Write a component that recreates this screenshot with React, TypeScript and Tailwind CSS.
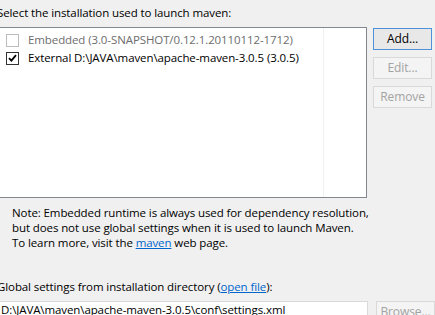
import React from "react";

const font = "font-['Segoe_UI','Open_Sans',sans-serif]";

const Checkbox = ({ checked, disabled }: { checked?: boolean; disabled?: boolean }) => (
  <span
    className={`flex h-[13px] w-[13px] shrink-0 items-center justify-center border bg-white ${
      disabled ? "border-[#bcbcbc]" : "border-[#333333]"
    }`}
  >
    {checked && (
      <svg width="9" height="8" viewBox="0 0 9 8">
        <path d="M1 4.2 L3.4 6.6 L8 1.2" fill="none" stroke="#000" strokeWidth="1.8" />
      </svg>
    )}
  </span>
);

const Button = ({ label, primary, disabled }: { label: string; primary?: boolean; disabled?: boolean }) => (
  <button
    className={`h-[22px] w-[59px] border text-[12px] leading-none tracking-[-0.1px] ${
      primary
        ? "border-[#4d92d8] bg-[#e8e8e8] text-black"
        : disabled
        ? "border-[#d9d9d9] bg-[#f4f4f4] text-[#a3a3a3]"
        : "border-[#adadad] bg-[#e1e1e1] text-black"
    }`}
  >
    {label}
  </button>
);

export default function App() {
  return (
    <div className={`h-[315px] w-[435px] overflow-hidden bg-[#f0f0f0] text-[11.5px] tracking-[-0.1px] text-black ${font}`}>
      <div className="-ml-[3px] w-[438px] pt-[5px]">
        <div className="leading-[15px]">Select the installation used to launch maven:</div>

        <div className="mt-[7px] flex">
          {/* installations table */}
          <div className="flex h-[171px] w-[370px] border border-[#828790] bg-white">
            <div className="w-[326px] border-r border-[#f0f0f0] pt-[3px]">
              <div className="flex h-[18px] items-center pl-[8px]">
                <Checkbox disabled />
                <span className="ml-[9px] text-[#6d6d6d]">Embedded (3.0-SNAPSHOT/0.12.1.20110112-1712)</span>
              </div>
              <div className="flex h-[18px] items-center pl-[8px]">
                <Checkbox checked />
                <span className="ml-[9px]">External D:\JAVA\maven\apache-maven-3.0.5 (3.0.5)</span>
              </div>
            </div>
          </div>

          <div className="ml-[6px] flex flex-col gap-[7px] pt-[1px]">
            <Button label="Add..." primary />
            <Button label="Edit..." disabled />
            <Button label="Remove" disabled />
          </div>
        </div>

        <div className="mt-[7px] pl-[15px] leading-[15px]">
          <p>Note: Embedded runtime is always used for dependency resolution,</p>
          <p>but does not use global settings when it is used to launch Maven.</p>
          <p>
            To learn more, visit the <span className="text-[#0066cc] underline">maven</span> web page.
          </p>
        </div>

        <div className="mt-[29px] leading-[15px]">
          Global settings from installation directory (<span className="text-[#0066cc] underline">open file</span>):
        </div>

        <div className="mt-[7px] flex">
          <div className="h-[23px] w-[372px] border border-[#d9d9d9] bg-white pl-[3px] leading-[15px]">
            D:\JAVA\maven\apache-maven-3.0.5\conf\settings.xml
          </div>
          <div className="ml-[8px]">
            <Button label="Browse..." disabled />
          </div>
        </div>
      </div>
    </div>
  );
}
